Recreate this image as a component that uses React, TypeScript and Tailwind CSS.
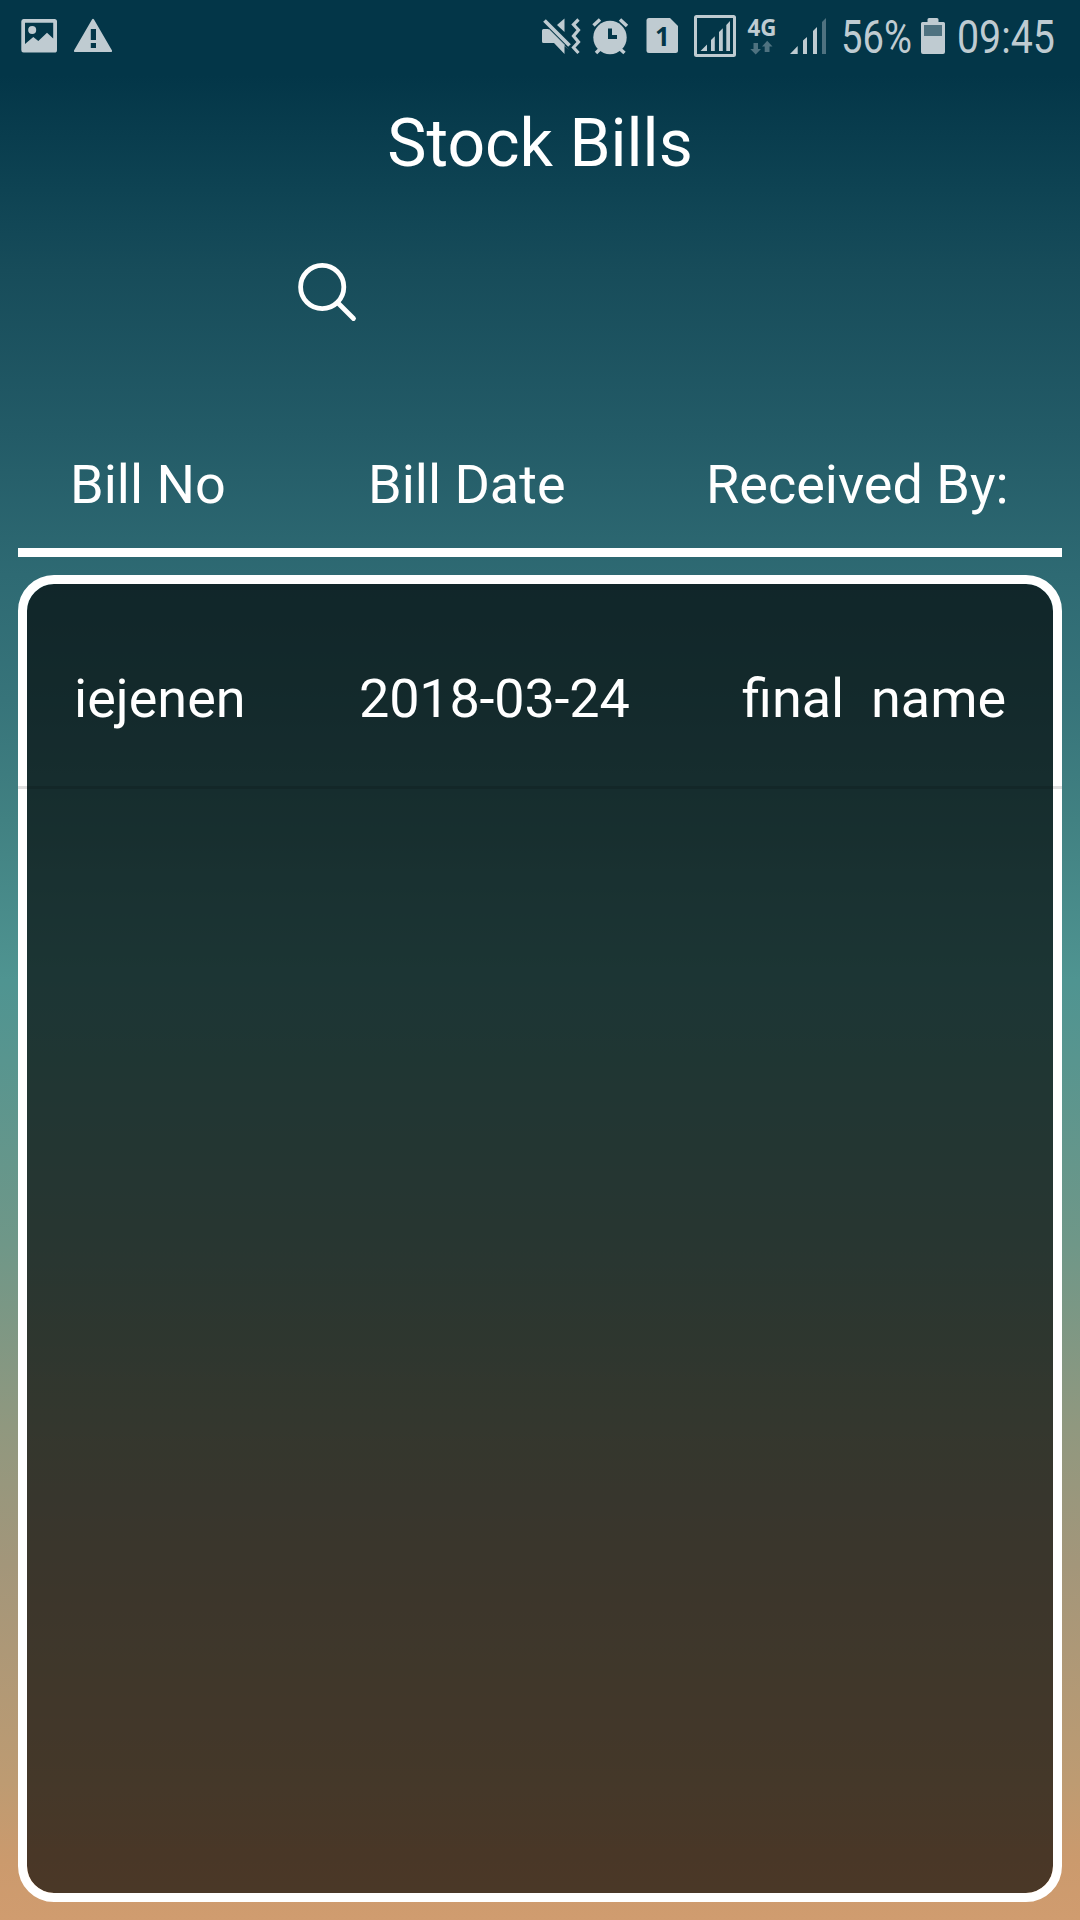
import React from 'react';

function StatusIcons() {
  return (
    <svg className="block h-[72px] w-[310px]" viewBox="530 0 310 72" fill="#bfcbd1">
      <path d="M564.5 18.5V32L557 25Z" />
      <path d="M542 30.5Q542 29 543.5 29H548L569 50L564.5 46V54L554 43H543.5Q542 43 542 41.5Z" />
      <path d="M546.5 18.500L571.500 43.500" stroke="#033648" strokeWidth="2.5" />
      <path d="M544.5 20.5L569.5 45.5" stroke="#bfcbd1" strokeWidth="3.8" />
      <path d="M549 29L564.500 44.500V46L548 30Z" />
      <path d="M578.5 19.5L573.5 24.5L578.5 30L573.5 36L578.5 42L573.5 47.5L578.5 53" fill="none" stroke="#bfcbd1" strokeWidth="3.2" />
      <circle cx="610" cy="37.5" r="16.7" />
      <path d="M593.5 25.5L600 19.5M620 19.5L627 26M596 53L601 48M624.500 53L619 48" stroke="#bfcbd1" strokeWidth="3.5" />
      <path d="M610 28.500V37H617" fill="none" stroke="#033648" strokeWidth="4" />
      <path d="M649 18H670L678 26V50.500Q678 53 675.500 53H649Q646.500 53 646.500 50.500V20.500Q646.500 18 649 18Z" />
      <text x="662.500" y="46" textAnchor="middle" fill="#033648" fontFamily="Noto Sans, sans-serif" fontSize="26" fontWeight="700">1</text>
      <rect x="695.500" y="16.500" width="39" height="39" rx="1" fill="none" stroke="#bfcbd1" strokeWidth="3" />
      <path d="M700.500 51L707 44.500V51ZM711 40L714.800 36.200V51H711ZM719 32L722.800 28.200V51H719ZM726.300 25L730 21V51H726.300Z" />
      <text x="747.500" y="35.800" textLength="29" lengthAdjust="spacingAndGlyphs" fontFamily="Noto Sans, sans-serif" fontSize="22.500" fontWeight="700">4G</text>
      <path fill="#4f7280" d="M753.500 43H758V49H761L755.700 54.500L750.300 49H753.500ZM764.700 52V46.500H762L767.200 40.800L772.500 46.500H769.500V52Z" />
      <path d="M790 54L797.700 46V54ZM803 40.500L807 37V54H803ZM813 31L817 27V54H813Z" />
      <path fill="#4f7280" d="M822 22L826 18V54H822Z" />
    </svg>
  );
}

function StatusBar() {
  return (
    <div className="flex h-[72px] shrink-0 items-start text-[#bfcbd1]">
      <svg className="block h-[72px] w-[130px]" viewBox="0 0 130 72" fill="#bfcbd1">
        <path fillRule="evenodd" d="M23.500 19H54.500Q57 19 57 21.500V50Q57 52.600 54.500 52.600H23.500Q21.300 52.600 21.300 50V21.500Q21.300 19 23.500 19ZM25 22.700V44L33.300 37L38.300 41L47 32.700L53.200 38.500V22.700Z" />
        <circle cx="32.200" cy="30" r="4" />
        <path fillRule="evenodd" d="M92 19.500Q93 18 94 19.500L112 50.500Q112.500 52 111 52H75Q73.500 52 74 50.500ZM90.800 29V40H96V29ZM90.800 43V48H96V43Z" />
      </svg>
      <div className="ml-[400px]"><StatusIcons /></div>
      <span className="ml-[1px] w-[72px] origin-left whitespace-nowrap pt-[10px] font-['Roboto'] text-[46px] leading-[54px] [transform:scaleX(0.83)]">56%</span>
      <svg className="ml-[8px] block h-[72px] w-[24px]" viewBox="921 0 24 72" fill="#bfcbd1">
        <path d="M929 18H937Q938.500 18 938.500 19.500V22H943.500Q945 22 945 23.500V52Q945 54 943 54H923Q921 54 921 52V23.500Q921 22 922.500 22H927.500V19.500Q927.500 18 929 18Z" />
        <rect x="924" y="25" width="18" height="11" fill="#4f7280" />
      </svg>
      <span className="ml-[12px] w-[100px] origin-left whitespace-nowrap pt-[10px] font-['Roboto'] text-[46px] leading-[54px] [transform:scaleX(0.855)]">09:45</span>
    </div>
  );
}

export default function App() {
  return (
    <div className="flex h-[1920px] w-[1080px] flex-col overflow-hidden bg-[linear-gradient(180deg,#033648_0px,#033648_75px,#0e4353_190px,#174c5a_270px,#235b67_435px,#2e6a73_575px,#37747a_700px,#418182_820px,#4f9491_980px,#58958f_1060px,#6f9788_1244px,#90987f_1427px,#a3967a_1565px,#bd9b72_1780px,#cb9a6d_1860px,#d09c6f_1920px)] font-['Roboto'] text-white">
      <StatusBar />
      <h1 className="h-[142px] shrink-0 pt-[33px] text-center text-[66px] font-normal leading-[78px]">Stock Bills</h1>
      <div className="flex h-[234px] shrink-0 pl-[290px] pt-[40px]">
        <svg className="block h-[80px] w-[80px]" viewBox="290 254 80 80" fill="none" stroke="white" strokeWidth="4.8" strokeLinecap="round">
          <circle cx="322.200" cy="287" r="21.600" />
          <path d="M338 303L353.500 318.500" />
        </svg>
      </div>
      <div className="mx-[18px] flex h-[109px] shrink-0 border-b-[9px] border-white pt-[5px] text-[54px] leading-[64px]">
        <span className="ml-[52px] w-[298px] whitespace-nowrap">Bill No</span>
        <span className="w-[338px] whitespace-nowrap">Bill Date</span>
        <span className="whitespace-nowrap">Received By:</span>
      </div>
      <main className="mx-[18px] mb-[18px] mt-[18px] flex-1 rounded-[36px] border-[9px] border-white bg-black/64 bg-clip-padding">
        <div className="-mx-[9px] flex h-[205px] border-b-[3px] border-black/12 pt-[83px] text-[54px] leading-[64px]">
          <span className="ml-[56px] w-[285px] whitespace-nowrap">iejenen</span>
          <span className="w-[383px] whitespace-nowrap tracking-[-0.2px]">2018-03-24</span>
          <span className="whitespace-pre">final  name</span>
        </div>
      </main>
    </div>
  );
}
